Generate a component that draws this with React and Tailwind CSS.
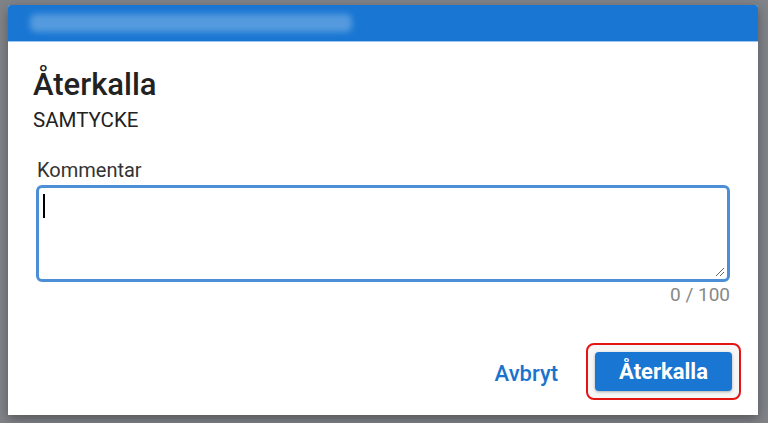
import React from "react";

export default function App() {
  return (
    <div className="w-[768px] h-[423px] bg-[#808388] overflow-hidden pt-[5px] pl-[8px]" style={{ fontFamily: "Roboto, 'Liberation Sans', sans-serif" }}>
      <div className="w-[750px] h-[410px] bg-white rounded-t-[3px] shadow-[0_4px_12px_rgba(0,0,0,0.35)] flex flex-col">
        <div className="h-[37px] bg-[#1976d2] rounded-t-[3px] flex items-center pl-[22px] border-b border-[#9cc3ec]">
          <div className="w-[322px] h-[18px] rounded-[6px] bg-[#5c9fe0] blur-[3px] opacity-90"></div>
        </div>
        <div className="px-[25px] pt-[25px] flex flex-col">
          <div className="text-[31px] leading-[36px] font-medium text-[#222]">Återkalla</div>
          <div className="text-[20.5px] leading-[24px] mt-[5px] text-[#222]">SAMTYCKE</div>
          <div className="mt-[26px] px-[3px]">
            <div className="text-[20px] leading-[24px] text-[#333] pl-[1px]">Kommentar</div>
            <div className="mt-[3px] h-[97px] w-[694px] border-[3px] border-[#4d8fd6] rounded-[6px] relative">
              <div className="absolute left-[4px] top-[6px] w-[1.5px] h-[24px] bg-black"></div>
              <svg className="absolute right-[2px] bottom-[2px]" width="11" height="11" viewBox="0 0 11 11">
                <path d="M10 2 L2 10 M10 6 L6 10" stroke="#666" strokeWidth="1" />
              </svg>
            </div>
            <div className="w-[694px] text-right text-[19px] leading-[22px] mt-[2px] text-[#888]">0 / 100</div>
          </div>
        </div>
        <div className="flex justify-end items-center mt-[37px] pr-[17px] gap-[28px]">
          <div className="text-[22px] font-medium text-[#1a73cc] mt-[4px]">Avbryt</div>
          <div className="border-2 border-[#e31414] rounded-[8px] p-[7px] bg-[#f6f6f6]">
            <div className="w-[137px] h-[39px] bg-[#1976d2] rounded-[4px] flex items-center justify-center text-white text-[22px] font-bold shadow-[0_1px_3px_rgba(0,0,0,0.3)]">Återkalla</div>
          </div>
        </div>
      </div>
    </div>
  );
}
